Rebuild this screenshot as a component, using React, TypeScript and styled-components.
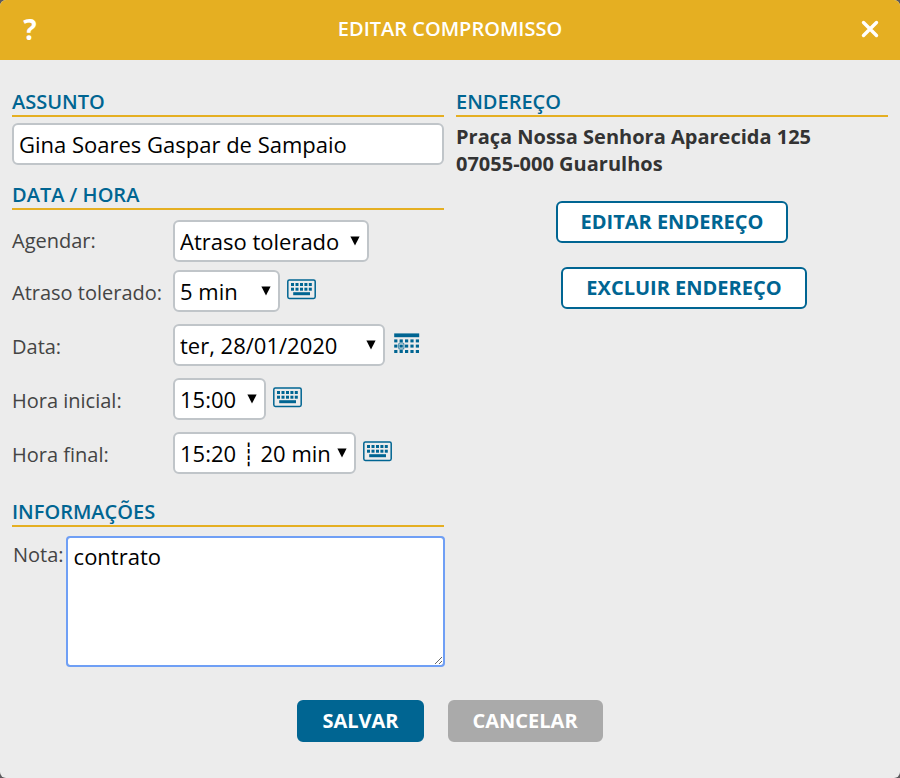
import React, { useId, useState } from "react";
import styled, { createGlobalStyle } from "styled-components";

const color = {
  amber: "#e5af22",
  blue: "#006592",
  panel: "#ececec",
  border: "#c0c5c9",
  text: "#333333",
  muted: "#aaaaaa",
  focus: "#6f9ff5",
};

const GlobalStyle = createGlobalStyle`
  *, *::before, *::after { box-sizing: border-box; }
  body {
    margin: 0;
    background: #5c5a5d;
    font-family: "Open Sans", "Noto Sans", sans-serif;
    color: ${color.text};
  }
  button, input, select, textarea { font-family: inherit; }
`;

const Dialog = styled.form`
  display: flex;
  flex-direction: column;
  min-height: 100vh;
  background: ${color.panel};
  border-radius: 6px;
  overflow: hidden;
`;

const TitleBar = styled.header`
  display: flex;
  align-items: center;
  justify-content: space-between;
  height: 60px;
  padding: 0 16px 2px;
  background: ${color.amber};
  color: #fff;
`;

const Title = styled.h1`
  margin: 0;
  font-size: 20px;
  font-weight: 600;
  line-height: 28px;
`;

const BarButton = styled.button`
  display: flex;
  align-items: center;
  justify-content: center;
  width: 28px;
  height: 40px;
  padding: 0;
  border: 0;
  background: none;
  color: inherit;
  font-size: 28px;
  font-weight: 700;
  line-height: 40px;
  cursor: pointer;
`;

const Columns = styled.div`
  display: grid;
  grid-template-columns: 1fr 1fr;
  gap: 12px;
  padding: 28px 12px 0;
`;

const Column = styled.div`
  min-width: 0;
`;

const Section = styled.section<{ $gap?: number }>`
  margin-top: ${(p) => p.$gap ?? 0}px;
`;

const Heading = styled.h2`
  margin: 0;
  border-bottom: 2px solid ${color.amber};
  color: ${color.blue};
  font-size: 20px;
  font-weight: 600;
  line-height: 27px;
`;

const TextInput = styled.input`
  display: block;
  width: 100%;
  height: 42px;
  margin-top: 6px;
  padding: 0 5px;
  border: 2px solid ${color.border};
  border-radius: 6px;
  background: #fff;
  color: #000;
  font-size: 22px;
`;

const Fields = styled.div`
  display: grid;
  gap: 12px;
  margin-top: 10px;
`;

const FieldGroup = styled.div`
  display: grid;
  gap: 8px;
`;

const Label = styled.label`
  color: #444;
  font-size: 20px;
  line-height: 28px;
  white-space: nowrap;
`;

const FieldRow = styled.div<{ $withPicker: boolean }>`
  display: grid;
  grid-template-columns: 161px auto 1fr;
  align-items: center;

  ${Label} {
    padding-top: ${(p) => (p.$withPicker ? 4 : 0)}px;
  }
`;

const SelectBox = styled.div<{ $width: number }>`
  position: relative;
  width: ${(p) => p.$width}px;
`;

const Select = styled.select`
  display: block;
  appearance: none;
  width: 100%;
  height: 42px;
  padding: 0 20px 0 5px;
  border: 2px solid ${color.border};
  border-radius: 6px;
  background: #fff;
  color: #000;
  font-size: 22px;
`;

const Arrow = styled.svg`
  position: absolute;
  top: 16px;
  right: 9px;
  pointer-events: none;
`;

const IconButton = styled.button`
  display: flex;
  justify-self: start;
  margin-left: 7px;
  padding: 0 0 4px;
  border: 0;
  background: none;
  color: ${color.blue};
  cursor: pointer;
`;

const NoteRow = styled.div`
  display: flex;
  gap: 3px;
  padding: 10px 0 0 1px;

  ${Label} {
    padding-top: 4px;
  }
`;

const NoteInput = styled.textarea`
  display: block;
  flex: 1;
  min-width: 0;
  height: 129px;
  padding: 3px 6px;
  border: 1px solid ${color.border};
  border-radius: 3px;
  outline: 2px solid ${color.focus};
  outline-offset: -1px;
  background: #fff;
  color: #000;
  font-size: 22px;
  line-height: 30px;
  resize: both;
`;

const Address = styled.address`
  margin-top: 6px;
  font-size: 20px;
  font-style: normal;
  font-weight: 700;
  line-height: 27px;
`;

const Button = styled.button<{ $variant: "primary" | "muted" | "outline" }>`
  height: 42px;
  padding: 0 23px;
  border: 2px solid ${(p) => (p.$variant === "muted" ? color.muted : color.blue)};
  border-radius: 6px;
  background: ${(p) =>
    p.$variant === "outline" ? "#fff" : p.$variant === "muted" ? color.muted : color.blue};
  color: ${(p) => (p.$variant === "outline" ? color.blue : "#fff")};
  font-size: 20px;
  font-weight: 700;
  line-height: 36px;
  white-space: nowrap;
  cursor: pointer;

  & + & {
    margin-left: 24px;
  }
`;

const AddressActions = styled.div`
  display: flex;
  flex-direction: column;
  align-items: center;
  gap: 24px;
  margin-top: 24px;
`;

const Footer = styled.footer`
  display: flex;
  justify-content: center;
  padding: 34px 12px 36px;
`;

function CloseIcon() {
  return (
    <svg width="20" height="20" viewBox="0 0 20 20" aria-hidden="true">
      <path d="M3.5 3.5 16.5 16.5M16.5 3.5 3.5 16.5" stroke="currentColor" strokeWidth="3.4" strokeLinecap="round" />
    </svg>
  );
}

function KeyboardIcon() {
  const columns = [4, 8.5, 13, 17.4, 21.8];
  return (
    <svg width="29" height="21" viewBox="0 0 29 21" aria-hidden="true">
      <rect x="0.8" y="1" width="27.4" height="18.4" rx="1.6" fill="none" stroke="currentColor" strokeWidth="1.5" />
      {[4, 8.7].map((y) =>
        columns.map((x) => <rect key={`${x}-${y}`} x={x} y={y} width="3" height="3" fill="currentColor" />),
      )}
      <rect x="6.2" y="13.2" width="16.8" height="3" fill="currentColor" />
    </svg>
  );
}

function CalendarIcon() {
  const columns = [0.2, 5.6, 11, 16.4, 21.8];
  return (
    <svg width="28" height="21" viewBox="-2 0 28 21" aria-hidden="true">
      <rect x="0.2" y="0.4" width="25" height="3.8" fill="currentColor" />
      {[6.4, 11.6, 17].map((y) =>
        columns.map((x) => <rect key={`${x}-${y}`} x={x} y={y} width="3.2" height="3" fill="currentColor" />),
      )}
      <rect x="4.7" y="10" width="5.2" height="6.2" rx="1.4" fill="none" stroke="currentColor" strokeWidth="1.2" opacity="0.7" />
    </svg>
  );
}

type FieldProps = {
  label: string;
  options: string[];
  width: number;
  picker?: { label: string; icon: React.ReactNode };
};

function SelectField({ label, options, width, picker }: FieldProps) {
  const id = useId();
  return (
    <FieldRow $withPicker={Boolean(picker)}>
      <Label htmlFor={id}>{label}</Label>
      <SelectBox $width={width}>
        <Select id={id} defaultValue={options[0]}>
          {options.map((option) => (
            <option key={option}>{option}</option>
          ))}
        </Select>
        <Arrow width="10" height="10" viewBox="0 0 10 10" aria-hidden="true">
          <path d="M0.4 0.5h9.2L5 9.6z" fill="#000" />
        </Arrow>
      </SelectBox>
      {picker && (
        <IconButton type="button" aria-label={picker.label}>
          {picker.icon}
        </IconButton>
      )}
    </FieldRow>
  );
}

export default function App() {
  const [subject, setSubject] = useState("Gina Soares Gaspar de Sampaio");
  const [note, setNote] = useState("contrato");

  return (
    <>
      <GlobalStyle />
      <Dialog onSubmit={(event) => event.preventDefault()}>
        <TitleBar>
          <BarButton type="button" aria-label="Ajuda">?</BarButton>
          <Title>EDITAR COMPROMISSO</Title>
          <BarButton type="button" aria-label="Fechar">
            <CloseIcon />
          </BarButton>
        </TitleBar>

        <Columns>
          <Column>
            <Section>
              <Heading id="subject-heading">ASSUNTO</Heading>
              <TextInput
                aria-labelledby="subject-heading"
                value={subject}
                onChange={(event) => setSubject(event.target.value)}
              />
            </Section>

            <Section $gap={16}>
              <Heading>DATA / HORA</Heading>
              <Fields>
                <FieldGroup>
                  <SelectField label="Agendar:" options={["Atraso tolerado"]} width={196} />
                  <SelectField
                    label="Atraso tolerado:"
                    options={["5 min"]}
                    width={107}
                    picker={{ label: "Digitar atraso", icon: <KeyboardIcon /> }}
                  />
                </FieldGroup>
                <SelectField
                  label="Data:"
                  options={["ter, 28/01/2020"]}
                  width={212}
                  picker={{ label: "Abrir calendário", icon: <CalendarIcon /> }}
                />
                <SelectField
                  label="Hora inicial:"
                  options={["15:00"]}
                  width={93}
                  picker={{ label: "Digitar hora inicial", icon: <KeyboardIcon /> }}
                />
                <SelectField
                  label="Hora final:"
                  options={["15:20 ┊ 20 min"]}
                  width={183}
                  picker={{ label: "Digitar hora final", icon: <KeyboardIcon /> }}
                />
              </Fields>
            </Section>

            <Section $gap={24}>
              <Heading>INFORMAÇÕES</Heading>
              <NoteRow>
                <Label htmlFor="note">Nota:</Label>
                <NoteInput id="note" value={note} onChange={(event) => setNote(event.target.value)} />
              </NoteRow>
            </Section>
          </Column>

          <Column>
            <Section>
              <Heading>ENDEREÇO</Heading>
              <Address>
                Praça Nossa Senhora Aparecida 125
                <br />
                07055-000 Guarulhos
              </Address>
              <AddressActions>
                <Button type="button" $variant="outline">EDITAR ENDEREÇO</Button>
                <Button type="button" $variant="outline">EXCLUIR ENDEREÇO</Button>
              </AddressActions>
            </Section>
          </Column>
        </Columns>

        <Footer>
          <Button type="submit" $variant="primary">SALVAR</Button>
          <Button type="button" $variant="muted">CANCELAR</Button>
        </Footer>
      </Dialog>
    </>
  );
}
